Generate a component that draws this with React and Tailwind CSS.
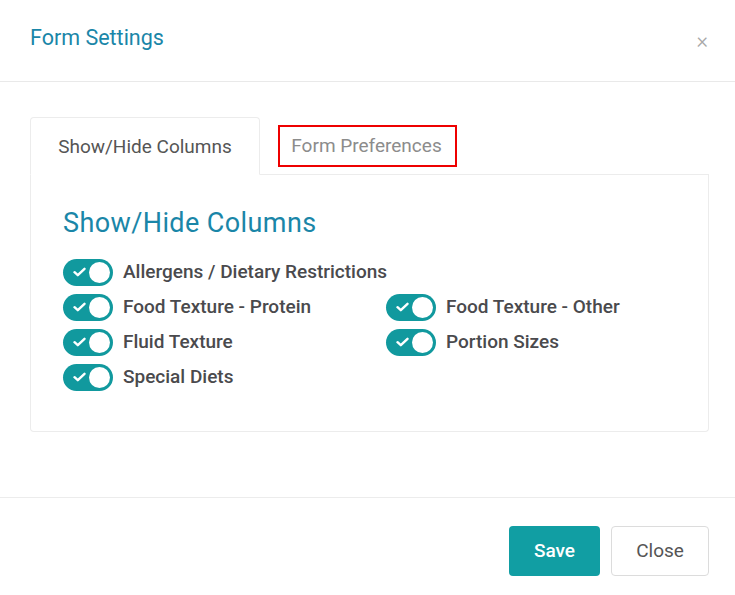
import { useState } from 'react';

const font = { fontFamily: 'Roboto, "Liberation Sans", sans-serif' };

function Toggle({ checked, onChange }) {
  return (
    <button
      type="button"
      onClick={onChange}
      className={`relative flex h-[27px] w-[50px] shrink-0 items-center rounded-full ${checked ? 'bg-[#11999e]' : 'bg-gray-300'}`}
    >
      {checked && (
        <svg className="absolute left-[10px] top-[8px]" width="13" height="10" viewBox="0 0 13 10">
          <path d="M1.5 5.2 L4.8 8.2 L11.5 1.8" fill="none" stroke="white" strokeWidth="2.4" strokeLinecap="round" strokeLinejoin="round" />
        </svg>
      )}
      <span className={`absolute top-[3px] h-[21px] w-[21px] rounded-full bg-white ${checked ? 'left-[26px]' : 'left-[3px]'}`} />
    </button>
  );
}

function Row({ label, checked, onChange }) {
  return (
    <div className="flex h-[35px] items-center gap-[10px]">
      <Toggle checked={checked} onChange={onChange} />
      <span className="text-[19px] font-medium text-[#4a4a4d]">{label}</span>
    </div>
  );
}

export default function App() {
  const [tab, setTab] = useState('columns');
  const [cols, setCols] = useState({
    allergens: true,
    protein: true,
    other: true,
    fluid: true,
    portion: true,
    diets: true,
  });

  const flip = (key) => setCols({ ...cols, [key]: !cols[key] });

  return (
    <div className="flex h-[595px] w-[735px] flex-col bg-white" style={font}>
      {/* Header */}
      <div className="flex h-[82px] items-center justify-between border-b border-[#e9e9e9] pl-[30px] pr-[27px]">
        <h1 className="-mt-[4px] text-[21.5px] text-[#1a86a8]">Form Settings</h1>
        <button className="text-[22px] font-light text-[#a8a8a8]">×</button>
      </div>

      {/* Body */}
      <div className="flex-1 pl-[30px] pr-[26px] pt-[35px]">
        <div className="flex border-b border-[#ececec]">
          <button
            onClick={() => setTab('columns')}
            className="-mb-px h-[58px] w-[230px] rounded-t-[4px] border border-b-white border-[#ececec] bg-white pt-[2px] text-[19px] text-[#555555]"
          >
            Show/Hide Columns
          </button>
          <div className="ml-[18px] flex items-center">
            <button
              onClick={() => setTab('prefs')}
              className="h-[42px] w-[179px] border-2 border-[#ee0000] pt-[2px] pr-[2px] text-[19px] text-[#8c8c8c]"
            >
              Form Preferences
            </button>
          </div>
        </div>

        <div className="h-[257px] rounded-b-[4px] border border-t-0 border-[#ececec] pl-[32px] pt-[30px]">
          <h2 className="text-[27px] leading-[36px] tracking-[0.4px] text-[#1a86a8]">Show/Hide Columns</h2>
          <div className="mt-[14px] grid grid-cols-[323px_1fr]">
            <div className="col-span-2">
              <Row label="Allergens / Dietary Restrictions" checked={cols.allergens} onChange={() => flip('allergens')} />
            </div>
            <Row label="Food Texture - Protein" checked={cols.protein} onChange={() => flip('protein')} />
            <Row label="Food Texture - Other" checked={cols.other} onChange={() => flip('other')} />
            <Row label="Fluid Texture" checked={cols.fluid} onChange={() => flip('fluid')} />
            <Row label="Portion Sizes" checked={cols.portion} onChange={() => flip('portion')} />
            <Row label="Special Diets" checked={cols.diets} onChange={() => flip('diets')} />
          </div>
        </div>
      </div>

      {/* Footer */}
      <div className="flex h-[98px] items-start justify-end gap-[11px] border-t border-[#ececec] pr-[26px] pt-[28px]">
        <button className="h-[50px] w-[91px] rounded-[4px] bg-[#119ea3] text-[19px] font-medium text-white">Save</button>
        <button className="h-[50px] w-[98px] rounded-[4px] border border-[#dcdcdc] bg-white text-[19px] text-[#555555]">Close</button>
      </div>
    </div>
  );
}
